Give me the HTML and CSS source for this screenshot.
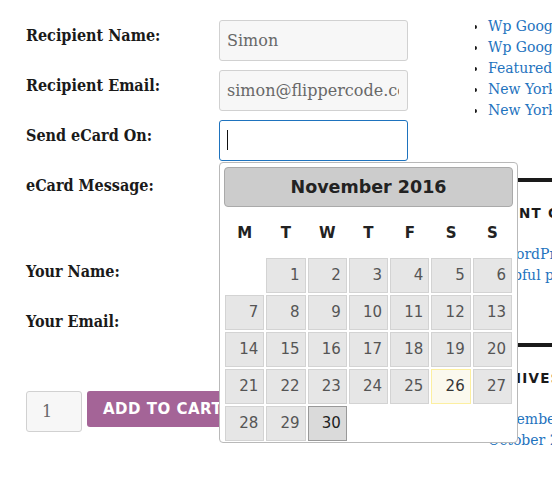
FILE: index.html
```html
<!DOCTYPE html>
<html lang="en">
<head>
    <meta charset="UTF-8">
    <meta name="viewport" content="width=device-width, initial-scale=1.0">
    <title>Send an eCard</title>
    <link rel="stylesheet" href="styles.css">
</head>
<body>

    <div class="page">

        <!-- Formulario de la tarjeta -->
        <main class="content">
            <form class="ecard-form">
                <div class="form-grid">
                    <label class="form-label">Recipient Name:</label>
                    <input type="text" class="form-input" value="Simon">

                    <label class="form-label">Recipient Email:</label>
                    <input type="text" class="form-input" value="simon@flippercode.com">

                    <label class="form-label">Send eCard On:</label>
                    <div class="date-field">
                        <input type="text" class="form-input is-focused">
                        <span class="caret"></span>

                        <!-- Calendario desplegado -->
                        <div class="datepicker">
                            <div class="datepicker-title">November 2016</div>
                            <table class="datepicker-table">
                                <thead>
                                    <tr>
                                        <th>M</th><th>T</th><th>W</th><th>T</th><th>F</th><th>S</th><th>S</th>
                                    </tr>
                                </thead>
                                <tbody>
                                    <tr>
                                        <td></td>
                                        <td><span class="day">1</span></td>
                                        <td><span class="day">2</span></td>
                                        <td><span class="day">3</span></td>
                                        <td><span class="day">4</span></td>
                                        <td><span class="day">5</span></td>
                                        <td><span class="day">6</span></td>
                                    </tr>
                                    <tr>
                                        <td><span class="day">7</span></td>
                                        <td><span class="day">8</span></td>
                                        <td><span class="day">9</span></td>
                                        <td><span class="day">10</span></td>
                                        <td><span class="day">11</span></td>
                                        <td><span class="day">12</span></td>
                                        <td><span class="day">13</span></td>
                                    </tr>
                                    <tr>
                                        <td><span class="day">14</span></td>
                                        <td><span class="day">15</span></td>
                                        <td><span class="day">16</span></td>
                                        <td><span class="day">17</span></td>
                                        <td><span class="day">18</span></td>
                                        <td><span class="day">19</span></td>
                                        <td><span class="day">20</span></td>
                                    </tr>
                                    <tr>
                                        <td><span class="day">21</span></td>
                                        <td><span class="day">22</span></td>
                                        <td><span class="day">23</span></td>
                                        <td><span class="day">24</span></td>
                                        <td><span class="day">25</span></td>
                                        <td><span class="day day-today">26</span></td>
                                        <td><span class="day">27</span></td>
                                    </tr>
                                    <tr>
                                        <td><span class="day">28</span></td>
                                        <td><span class="day">29</span></td>
                                        <td><span class="day day-hover">30</span></td>
                                        <td></td>
                                        <td></td>
                                        <td></td>
                                        <td></td>
                                    </tr>
                                </tbody>
                            </table>
                        </div>
                    </div>

                    <label class="form-label">eCard Message:</label>
                    <textarea class="form-input form-textarea"></textarea>

                    <label class="form-label">Your Name:</label>
                    <input type="text" class="form-input">

                    <label class="form-label">Your Email:</label>
                    <input type="text" class="form-input">
                </div>

                <div class="cart-row">
                    <input type="text" class="qty" value="1">
                    <button type="button" class="add-to-cart">Add to cart</button>
                </div>
            </form>
        </main>

        <!-- Barra lateral -->
        <aside class="sidebar">
            <section class="widget">
                <ul class="widget-list">
                    <li><a href="#">Wp Google Map Plugin</a></li>
                    <li><a href="#">Wp Google Map Pro</a></li>
                    <li><a href="#">Featured Listings</a></li>
                    <li><a href="#">New York City Tour</a></li>
                    <li><a href="#">New York Restaurants</a></li>
                </ul>
            </section>

            <section class="widget">
                <h2 class="widget-title">Recent Comments</h2>
                <ul class="widget-list">
                    <li><a href="#">A WordPress Commenter on Hello world!</a></li>
                    <li><a href="#">Helpful product, thanks</a></li>
                </ul>
            </section>

            <section class="widget">
                <h2 class="widget-title">Archives</h2>
                <ul class="widget-list">
                    <li><a href="#">November 2016</a></li>
                    <li><a href="#">October 2016</a></li>
                </ul>
            </section>
        </aside>
    </div>

</body>
</html>
```

FILE: styles.css
```css
/* Estilos generales */
html, body {
    overflow: hidden;
}

body {
    margin: 0;
    padding: 0;
    background-color: #fff;
    color: #1a1a1a;
    font-family: 'DejaVu Serif', 'Liberation Serif', serif;
}

.page {
    display: flex;
    align-items: flex-start;
}

/* Columna principal */
.content {
    flex: none;
    width: 382px;
    padding: 20px 0 0 26px;
}

.form-grid {
    display: grid;
    grid-template-columns: 193px 189px;
    row-gap: 9px;
    align-items: start;
}

.form-label {
    padding-top: 4px;
    font-family: 'DejaVu Serif Condensed', 'DejaVu Serif', serif;
    font-stretch: condensed;
    font-size: 16px;
    font-weight: 700;
    line-height: 24px;
    color: #1a1a1a;
}

.form-input {
    display: block;
    width: 189px;
    height: 41px;
    margin: 0;
    padding: 0 8px 0 7px;
    box-sizing: border-box;
    border: 1px solid #d1d1d1;
    border-radius: 3px;
    background-color: #f7f7f7;
    font-family: 'DejaVu Serif', 'Liberation Serif', serif;
    font-size: 16px;
    color: #686868;
    outline: none;
}

.form-input.is-focused {
    border-color: #1e73be;
    background-color: #fff;
}

.form-textarea {
    height: 77px;
    resize: none;
}

/* Campo de fecha con el calendario */
.date-field {
    position: relative;
}

.caret {
    position: absolute;
    left: 8px;
    top: 10px;
    width: 1px;
    height: 20px;
    background-color: #111;
}

.datepicker {
    position: absolute;
    top: calc(100% + 1px);
    left: 0;
    z-index: 10;
    width: 289px;
    padding: 4px 4px 0;
    border: 1px solid #b9b9b9;
    border-radius: 4px;
    background-color: #fff;
    font-family: 'DejaVu Sans', Verdana, sans-serif;
}

.datepicker-title {
    height: 38px;
    line-height: 38px;
    border: 1px solid #aaa;
    border-radius: 4px;
    background-color: #ccc;
    color: #222;
    text-align: center;
    font-size: 17.5px;
    font-weight: 700;
}

.datepicker-table {
    width: 100%;
    margin-top: 2px;
    border-collapse: collapse;
    table-layout: fixed;
}

.datepicker-table th {
    height: 48px;
    padding: 0;
    font-size: 15px;
    font-weight: 700;
    color: #222;
    text-align: center;
}

.datepicker-table td {
    padding: 1px;
}

.day {
    display: block;
    height: 33px;
    line-height: 33px;
    padding-right: 5px;
    border: 1px solid #d3d3d3;
    background-color: #e6e6e6;
    color: #555;
    text-align: right;
    font-size: 15px;
}

.day-today {
    border-color: #fcefa1;
    background-color: #fbf9ee;
    color: #363636;
}

.day-hover {
    border-color: #999;
    background-color: #dadada;
    color: #212121;
}

/* Cantidad y botón */
.cart-row {
    display: flex;
    align-items: flex-start;
    gap: 5px;
    margin-top: 44px;
}

.qty {
    width: 56px;
    height: 41px;
    margin: 0;
    padding: 0 0 0 15px;
    box-sizing: border-box;
    border: 1px solid #d1d1d1;
    border-radius: 3px;
    background-color: #f7f7f7;
    font-family: 'DejaVu Serif', 'Liberation Serif', serif;
    font-size: 16px;
    color: #686868;
}

.add-to-cart {
    height: 36px;
    padding: 0 16px;
    border: none;
    border-radius: 3px;
    background-color: #a46497;
    color: #fff;
    font-family: 'DejaVu Sans', sans-serif;
    font-size: 15px;
    font-weight: 700;
    letter-spacing: 0.5px;
    text-transform: uppercase;
    white-space: nowrap;
}

/* Barra lateral */
.sidebar {
    flex: 1;
    min-width: 0;
    margin-left: 67px;
    padding-top: 16px;
    overflow: hidden;
    white-space: nowrap;
}

.widget {
    margin-bottom: 57px;
}

.widget + .widget {
    border-top: 4px solid #1a1a1a;
}

.widget-title {
    margin: 21px 0 21px;
    font-family: 'DejaVu Sans', sans-serif;
    font-size: 13.5px;
    font-weight: 700;
    line-height: 20px;
    letter-spacing: 1.3px;
    text-transform: uppercase;
    color: #1a1a1a;
}

.widget-list {
    margin: 0;
    padding-left: 13px;
    list-style: disc;
}

.widget-list li {
    font-size: 14px;
    line-height: 21px;
}

.widget-list a {
    color: #1e73be;
    text-decoration: none;
}
```
